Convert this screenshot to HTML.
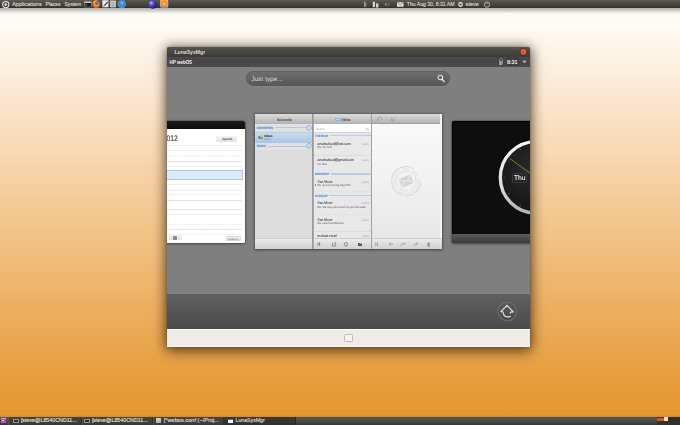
<!DOCTYPE html>
<html><head><meta charset="utf-8">
<style>
*{margin:0;padding:0;box-sizing:border-box}
html,body{width:680px;height:425px;overflow:hidden}
body{position:relative;font-family:"Liberation Sans",sans-serif;
background:linear-gradient(to bottom,#fefcf9 0px,#fefaf4 25px,#fae5cc 105px,#f3ca96 205px,#edb062 305px,#e69a35 395px,#e5962f 425px)}
.a{position:absolute}
.t{position:absolute;line-height:1;white-space:nowrap;text-rendering:geometricPrecision;-webkit-font-smoothing:antialiased}
.p{text-rendering:auto;-webkit-font-smoothing:auto}
svg{position:absolute;overflow:visible}
text{font-family:"Liberation Sans",sans-serif;white-space:pre;text-rendering:geometricPrecision}
.p text{text-rendering:auto}
</style></head><body>
<div class="a" style="left:0px;top:0px;width:680px;height:8px;background:linear-gradient(#5c5a55,#4a4944 40%,#3d3c38 80%,#31302c)"></div>
<div class="a" style="left:0px;top:8px;width:680px;height:6px;background:linear-gradient(rgba(30,25,20,.34),rgba(30,25,20,.2) 45%,rgba(30,25,20,.07) 75%,rgba(30,25,20,0))"></div>
<svg style="left:0;top:0" width="12" height="9"><circle cx="5.8" cy="4.6" r="3.1" fill="none" stroke="#e8e4dc" stroke-width="1.1"/><circle cx="5.8" cy="4.6" r="1.3" fill="#e8e4dc"/></svg>
<svg class="a p" style="left:0;top:0;overflow:visible" width="1" height="1"><text x="11.90" y="6.30" font-size="5.6" fill="#e2ded6" font-weight="normal" stroke="#e2ded6" stroke-width="0.12" textLength="29.8" lengthAdjust="spacingAndGlyphs" style="">Applications</text></svg>
<svg class="a p" style="left:0;top:0;overflow:visible" width="1" height="1"><text x="45.60" y="6.30" font-size="5.6" fill="#e2ded6" font-weight="normal" stroke="#e2ded6" stroke-width="0.12" textLength="15" lengthAdjust="spacingAndGlyphs" style="">Places</text></svg>
<svg class="a p" style="left:0;top:0;overflow:visible" width="1" height="1"><text x="64.50" y="6.30" font-size="5.6" fill="#e2ded6" font-weight="normal" stroke="#e2ded6" stroke-width="0.12" textLength="16.8" lengthAdjust="spacingAndGlyphs" style="">System</text></svg>
<svg style="left:83px;top:0" width="46" height="9"><rect x="1" y="1.2" width="7.6" height="6" rx=".6" fill="#9a9a98"/><rect x="1.6" y="2.4" width="6.4" height="4.4" fill="#1e1e1e"/><rect x="1.6" y="1.8" width="6.4" height="1" fill="#d8d8d6"/><path d="M2.6 4.2 L3.8 5 L2.6 5.8" fill="none" stroke="#ddd" stroke-width=".5"/><circle cx="13.1" cy="4.2" r="3.9" fill="#e2581a"/><circle cx="13.4" cy="4" r="2.6" fill="#f29a2a"/><circle cx="13.9" cy="3.2" r="1.7" fill="#3d7cc6"/><path d="M9.8 3 Q11 -0.4 14.6 0.3 Q12 0.8 11.4 3Z" fill="#f6c24a"/><rect x="19.4" y=".3" width="6" height="7" fill="#f2f2f0"/><path d="M20.6 6.4 L24.6 2.2" stroke="#2a2a2a" stroke-width="1.1"/><path d="M20.4 6.6 L21.4 5.6" stroke="#e8d24a" stroke-width=".9"/><path d="M24.2 2.4 L25.2 1.4" stroke="#a050a0" stroke-width=".9"/><rect x="27.1" y=".6" width="5.8" height="6.8" fill="#cfcfcd"/><path d="M27.8 2.6 H32.2 M27.8 4.2 H32.2 M27.8 5.8 H32.2 M29.3 2.4 V7 M30.8 2.4 V7" stroke="#8e8e8c" stroke-width=".4"/><circle cx="38.8" cy="4.2" r="3.8" fill="#3c84cf"/><circle cx="38.8" cy="4.2" r="3.8" fill="none" stroke="#78aee6" stroke-width=".5"/><path d="M37.6 3.3 Q37.7 2.1 38.8 2.1 Q40 2.1 40 3.2 Q40 3.9 39 4.3 L38.9 5.2" fill="none" stroke="#bfe0ff" stroke-width=".7"/><circle cx="38.9" cy="6.2" r=".35" fill="#bfe0ff"/></svg>
<svg style="left:147px;top:0" width="24" height="9"><defs><radialGradient id="pb" cx=".3" cy=".3" r=".75"><stop offset="0" stop-color="#c8b8f0"/><stop offset=".35" stop-color="#5a58c8"/><stop offset=".8" stop-color="#2a2898"/><stop offset="1" stop-color="#141470"/></radialGradient></defs><circle cx="5.8" cy="4.5" r="4.2" fill="url(#pb)"/><rect x="13.2" y="0" width="8" height="8" rx="1" fill="#5d8fcf"/><rect x="13.2" y="0" width="8" height="6.6" rx="1" fill="#f0c070"/><circle cx="17.2" cy="3.8" r="2.6" fill="none" stroke="#f08a1c" stroke-width="1.8"/><circle cx="17.2" cy="3.8" r="1" fill="#a8b8c8"/></svg>
<svg style="left:362px;top:0" width="130" height="9"><path d="M2.3 2 L4.3 3.6 L2.6 5.4 M2.6 1.6 L2.6 7 L4.3 5.6 L2.4 4" fill="none" stroke="#cfcbc3" stroke-width=".6"/><rect x="10.8" y="1.8" width="2.2" height="5.4" fill="#d9d5cd"/><rect x="14" y="3.5" width="2.4" height="4" fill="#d9d5cd"/><path d="M22.4 4.5 L24.6 2.6 L24.6 6.4Z" fill="#8d8a84"/><path d="M26 3.3 L27.2 5.6 M27.2 3.3 L26 5.6" stroke="#8d8a84" stroke-width=".5"/><rect x="35" y="2.2" width="6.6" height="4.6" rx=".8" fill="#e6e2da"/><path d="M35.6 2.8 L38.3 5 L41 2.8" fill="none" stroke="#4a4944" stroke-width=".6"/><circle cx="98.5" cy="4.5" r="2.4" fill="#e4e0d8"/><circle cx="98.5" cy="4.5" r="1.1" fill="#3c3b37"/><circle cx="125" cy="4.7" r="2.6" fill="none" stroke="#cfcbc3" stroke-width=".8"/><rect x="124.5" y="1.4" width="1" height="2.6" fill="#3c3b37"/><rect x="124.6" y="1.5" width=".8" height="2.6" fill="#cfcbc3"/></svg>
<svg class="a p" style="left:0;top:0;overflow:visible" width="1" height="1"><text x="406.80" y="6.30" font-size="5.4" fill="#e2ded6" font-weight="normal" stroke="#e2ded6" stroke-width="0.12" textLength="47.7" lengthAdjust="spacingAndGlyphs" style="">Thu Aug 30, 8:31 AM</text></svg>
<svg class="a p" style="left:0;top:0;overflow:visible" width="1" height="1"><text x="465.60" y="6.30" font-size="5.6" fill="#e2ded6" font-weight="normal" stroke="#e2ded6" stroke-width="0.12" textLength="13.4" lengthAdjust="spacingAndGlyphs" style="">steve</text></svg>
<div class="a" style="left:0px;top:414.5px;width:680px;height:2.5px;background:linear-gradient(rgba(60,40,10,0),rgba(60,40,10,.12))"></div>
<div class="a" style="left:0px;top:417px;width:680px;height:8px;background:linear-gradient(#4c5257,#55544f 18%,#4a4945 55%,#383733)"></div>
<div class="a" style="left:8px;top:417px;width:74px;height:8px;background:linear-gradient(#45443f,#3a3935);border-right:1px solid #2e2d2a;border-left:1px solid #55544f"></div>
<div class="a" style="left:82px;top:417px;width:71px;height:8px;background:linear-gradient(#45443f,#3a3935);border-right:1px solid #2e2d2a;border-left:1px solid #55544f"></div>
<div class="a" style="left:153px;top:417px;width:71px;height:8px;background:linear-gradient(#45443f,#3a3935);border-right:1px solid #2e2d2a;border-left:1px solid #55544f"></div>
<div class="a" style="left:224px;top:417px;width:72px;height:8px;background:linear-gradient(#3a3935,#32312e);border-right:1px solid #2a2926"></div>
<div class="a" style="left:0.5px;top:418.2px;width:5.5px;height:5.2px;background:linear-gradient(#d8c8e0 0,#c0a8cc 22%,#a83ab0 26%,#cc50d0)"></div>
<div class="a" style="left:1.6px;top:419.6px;width:2.4px;height:1.6px;background:#f0e8f4"></div>
<div class="a" style="left:12.6px;top:418.6px;width:6px;height:4px;background:#2c2c2a;border:0.6px solid #9a9890;border-radius:.6px"></div>
<svg class="a p" style="left:0;top:0;overflow:visible" width="1" height="1"><text x="20.90" y="422.40" font-size="5.2" fill="#e6e2da" font-weight="normal" stroke="#e6e2da" stroke-width="0.12" textLength="55.8" lengthAdjust="spacingAndGlyphs" style="">[steve@L8540CND11...</text></svg>
<div class="a" style="left:83.6px;top:418.6px;width:6px;height:4px;background:#2c2c2a;border:0.6px solid #9a9890;border-radius:.6px"></div>
<svg class="a p" style="left:0;top:0;overflow:visible" width="1" height="1"><text x="91.90" y="422.40" font-size="5.2" fill="#e6e2da" font-weight="normal" stroke="#e6e2da" stroke-width="0.12" textLength="55.8" lengthAdjust="spacingAndGlyphs" style="">[steve@L8540CND11...</text></svg>
<div class="a" style="left:155.5px;top:418.4px;width:5px;height:5px;background:linear-gradient(#ddd,#aaa);border-radius:.5px"></div>
<svg class="a p" style="left:0;top:0;overflow:visible" width="1" height="1"><text x="163.80" y="422.40" font-size="5.2" fill="#e2ded6" font-weight="normal" stroke="#e2ded6" stroke-width="0.12" textLength="55.2" lengthAdjust="spacingAndGlyphs" style="">[*webos.conf (~/Proj...</text></svg>
<div class="a" style="left:227.5px;top:418.8px;width:5.3px;height:4px;background:#f4f4f4;border-top:1.2px solid #5577aa"></div>
<svg class="a p" style="left:0;top:0;overflow:visible" width="1" height="1"><text x="235.50" y="422.40" font-size="5.2" fill="#e2ded6" font-weight="normal" stroke="#e2ded6" stroke-width="0.12" textLength="29.2" lengthAdjust="spacingAndGlyphs" style="">LunaSysMgr</text></svg>
<div class="a" style="left:657px;top:417px;width:23px;height:8px;background:#33322f"></div>
<div class="a" style="left:657px;top:417.6px;width:7px;height:3.2px;background:#d2562a"></div>
<div class="a" style="left:663.6px;top:417.2px;width:4.2px;height:3.8px;background:#fbe4d4;box-shadow:0 0 .5px #fff"></div>
<div class="a" style="left:668.5px;top:417.6px;width:5.5px;height:3.2px;background:#2c2c2a"></div>
<div class="a" style="left:674.5px;top:417.6px;width:5.5px;height:3.2px;background:#2c2c2a"></div>
<div class="a" style="left:167px;top:47px;width:363px;height:300px;border-radius:2px 2px 0 0;overflow:hidden;background:#7f7f7f;box-shadow:0 4px 14px 1px rgba(40,20,0,.5),0 0 11px 1px rgba(30,20,10,.38),0 0 2px rgba(0,0,0,.35)"><div class="a" style="left:0px;top:0px;width:363px;height:10px;background:linear-gradient(#575651,#4a4944 35%,#3c3b37)"></div>
<svg class="a p" style="left:0;top:0;overflow:visible" width="1" height="1"><text x="7.40" y="6.80" font-size="5.2" fill="#dfdbd2" font-weight="bold" textLength="30.8" lengthAdjust="spacingAndGlyphs" style="">LunaSysMgr</text></svg>
<svg style="left:352px;top:1px" width="10" height="9"><circle cx="4.4" cy="3.9" r="3.6" fill="#2e2d29" opacity=".5"/><circle cx="4.4" cy="3.9" r="2.8" fill="#ee5a24"/><circle cx="4.4" cy="3.6" r="2" fill="#f4703a" opacity=".6"/><circle cx="4.4" cy="3.9" r=".7" fill="#6a2a12"/></svg>
<div class="a" style="left:0px;top:10px;width:363px;height:10px;background:linear-gradient(#4b4b4a,#464646 55%,#4d4d4d)"></div>
<svg class="a p" style="left:0;top:0;overflow:visible" width="1" height="1"><text x="2.60" y="16.60" font-size="4.7" fill="#f2f2f2" font-weight="bold" textLength="22.5" lengthAdjust="spacingAndGlyphs" style="">HP webOS</text></svg>
<div class="a" style="left:330.3px;top:10.4px;width:7px;height:9px;background:rgba(0,0,0,.1)"></div>
<div class="a" style="left:338.6px;top:10.4px;width:13px;height:9px;background:rgba(0,0,0,.12)"></div>
<div class="a" style="left:331.6px;top:11.4px;width:4.6px;height:6.8px;border:.6px solid #8a8a8a;border-radius:1.6px;background:#444"></div>
<div class="a" style="left:332.4px;top:14.2px;width:3px;height:3.4px;background:#9a9a9a;border-radius:.6px"></div>
<svg class="a p" style="left:0;top:0;overflow:visible" width="1" height="1"><text x="339.90" y="16.70" font-size="6.0" fill="#f4f4f4" font-weight="bold" textLength="10.6" lengthAdjust="spacingAndGlyphs" style="">8:31</text></svg>
<svg style="left:354px;top:12px" width="8" height="6"><path d="M1.2 1.8 L5.6 1.8 L3.4 4.2Z" fill="#bbb"/></svg>
<div class="a" style="left:0px;top:20px;width:363px;height:227px;background:#7f7f7f"></div>
<div class="a" style="left:79px;top:23.8px;width:204px;height:15px;border-radius:7.5px;background:linear-gradient(#717171,#5f5f5f 60%,#575757);box-shadow:inset 0 .8px .8px rgba(0,0,0,.22),0 .5px .5px rgba(255,255,255,.1)"></div>
<svg class="a " style="left:0;top:0;overflow:visible" width="1" height="1"><text x="84.20" y="34.00" font-size="6.4" fill="#dcdcdc" font-weight="normal" textLength="31.6" lengthAdjust="spacingAndGlyphs" style="">Just type...</text></svg>
<svg style="left:268px;top:25px" width="14" height="14"><circle cx="5.3" cy="5.5" r="2.3" fill="none" stroke="#e4e4e4" stroke-width="1.05"/><path d="M7 7.3 L9.2 9.5" stroke="#e4e4e4" stroke-width="1.4" stroke-linecap="round"/></svg>
<div class="a" style="left:0px;top:246px;width:363px;height:1px;background:#838383"></div>
<div class="a" style="left:0px;top:247px;width:363px;height:35px;background:linear-gradient(#606060,#4a4a4a)"></div>
<div class="a" style="left:0px;top:282px;width:363px;height:18px;background:#efebe7;border-top:1px solid #fbfaf8;border-bottom:1px solid #fbfaf8"></div>
<div class="a" style="left:177px;top:286.5px;width:9px;height:8px;border:1px solid #bdb9b4;border-radius:1.5px;background:#f7f5f2"></div>
<svg style="left:328px;top:253px" width="25" height="24"><defs><linearGradient id="hb" x1="0" y1="0" x2="0" y2="1"><stop offset="0" stop-color="#5c5c5c"/><stop offset="1" stop-color="#484848"/></linearGradient></defs><circle cx="12.3" cy="11.4" r="9.3" fill="url(#hb)" stroke="#686868" stroke-width="1.5"/><path d="M8.2 12.1 L5.9 11.6 L12 5.4 L18.3 11.9 L15.5 12.1 L15.3 13.6" fill="none" stroke="#e4e4e4" stroke-width="1.1" stroke-linejoin="round"/><path d="M8.4 12.6 C8.4 15.6 10 16.9 12.4 16.9 C13.8 16.9 15 16.7 15.8 16.3" fill="none" stroke="#e4e4e4" stroke-width="1.1"/></svg>
<div class="a" style="left:-10px;top:74px;width:88px;height:121.6px;will-change:transform"><div class="a" style="left:0px;top:0px;width:88px;height:121.6px;background:#fff;border-radius:0 1.5px 1.5px 0;box-shadow:0 0 1.5px 1px rgba(0,0,0,.22),0 1px 3px rgba(0,0,0,.3)"></div>
<div class="a" style="left:0px;top:0px;width:88px;height:8px;background:linear-gradient(#1c1c1c,#0c0c0c);border-radius:0 1.5px 0 0"></div>
<svg class="a " style="left:0;top:0;overflow:visible" width="1" height="1"><text x="9.50" y="19.90" font-size="8.2" fill="#2e2e2e" font-weight="normal" stroke="#2e2e2e" stroke-width="0.12" textLength="11.1" lengthAdjust="spacingAndGlyphs" style="">012</text></svg>
<div class="a" style="left:59.3px;top:15px;width:21px;height:6px;border-radius:1.5px;background:linear-gradient(#f6f6f6,#e4e4e4);box-shadow:0 0 .6px rgba(0,0,0,.25)"></div>
<svg class="a " style="left:0;top:0;overflow:visible" width="1" height="1"><text x="65.00" y="19.00" font-size="3.4" fill="#555" font-weight="bold" textLength="10.3" lengthAdjust="spacingAndGlyphs" style="">Agenda</text></svg>
<div class="a" style="left:0px;top:24px;width:85px;height:0.8px;background:#efefef"></div>
<div class="a" style="left:0px;top:29.2px;width:85px;height:0.8px;background:#f0f0f0"></div>
<svg style="left:0;top:0" width="88" height="122"><line x1="3" y1="35.0" x2="85" y2="35.0" stroke="#e4e4e4" stroke-width=".8" stroke-dasharray="1.4 1"/></svg>
<div class="a" style="left:0px;top:39.6px;width:85px;height:0.8px;background:#e2e2e2"></div>
<div class="a" style="left:0px;top:45px;width:85px;height:0.8px;background:#f0f0f0"></div>
<div class="a" style="left:0px;top:63px;width:85px;height:0.8px;background:#efefef"></div>
<div class="a" style="left:0px;top:68.6px;width:85px;height:0.8px;background:#eaeaea"></div>
<div class="a" style="left:0px;top:73.2px;width:85px;height:0.8px;background:#f0f0f0"></div>
<div class="a" style="left:0px;top:79px;width:85px;height:0.8px;background:#e4e4e4"></div>
<div class="a" style="left:0px;top:88.4px;width:85px;height:0.8px;background:#e4e4e4"></div>
<div class="a" style="left:0px;top:93px;width:85px;height:0.8px;background:#eeeeee"></div>
<svg style="left:0;top:0" width="88" height="122"><line x1="3" y1="103.7" x2="85" y2="103.7" stroke="#e4e4e4" stroke-width=".8" stroke-dasharray="1.4 1"/></svg>
<div class="a" style="left:0px;top:107.6px;width:85px;height:0.8px;background:#e4e4e4"></div>
<div class="a" style="left:0px;top:112.5px;width:85px;height:0.8px;background:#f2f2f2"></div>
<div class="a" style="left:0px;top:49.4px;width:86px;height:9.8px;background:#dce9f7;border:.6px solid #a8c5e6"></div>
<div class="a" style="left:12px;top:113.7px;width:13px;height:5.8px;background:linear-gradient(#f4f4f4,#e0e0e0);border-radius:1px"></div>
<div class="a" style="left:16px;top:115.2px;width:4px;height:4px;background:#8a8a8a;border-radius:.4px"></div>
<div class="a" style="left:68.6px;top:114.9px;width:15.6px;height:4.8px;background:linear-gradient(#f6f6f6,#e2e2e2);border:.4px solid #d4d4d4;border-radius:1.2px"></div>
<svg class="a " style="left:0;top:0;overflow:visible" width="1" height="1"><text x="71.00" y="118.50" font-size="2.8" fill="#666" font-weight="normal" style="">Jump to...</text></svg>
</div>
<div class="a" style="left:285px;top:73.6px;width:90px;height:122px;will-change:transform"><div class="a" style="left:0px;top:0px;width:90px;height:122px;background:#0e0e0e;border:.6px solid #000;border-radius:1.5px 0 0 1.5px;box-shadow:0 0 1.5px 1px rgba(0,0,0,.22),0 1px 3px rgba(0,0,0,.3)"></div>
<div class="a" style="left:0px;top:113px;width:90px;height:9px;background:linear-gradient(#5c5c5c,#3a3a3a);border-radius:0 0 0 1.5px"></div>
<svg style="left:0;top:0" width="90" height="113"><defs><radialGradient id="cf" cx=".45" cy=".4" r=".6"><stop offset="0" stop-color="#2c2c2c"/><stop offset="1" stop-color="#141414"/></radialGradient><linearGradient id="cr" x1="0" y1="0" x2="0" y2="1"><stop offset="0" stop-color="#fafafa"/><stop offset=".6" stop-color="#dedede"/><stop offset="1" stop-color="#b4b4b4"/></linearGradient></defs><circle cx="84.1" cy="56.4" r="37.6" fill="none" stroke="#000" stroke-width="1"/><circle cx="84.1" cy="56.4" r="35.8" fill="url(#cf)" stroke="url(#cr)" stroke-width="3.4"/><path d="M57.4 37.3 L84 56.4" stroke="#74a830" stroke-width=".8"/><g fill="#5f8f24"><circle cx="68.1" cy="28.7" r=".6"/><circle cx="57" cy="40.7" r=".6"/><circle cx="52.1" cy="56.6" r=".6"/><circle cx="57" cy="72.5" r=".6"/><circle cx="68.1" cy="84.3" r=".6"/></g></svg>
<div class="a" style="left:59.8px;top:51.8px;width:15px;height:10.3px;background:#242424;border:.5px solid #363636;border-radius:1px"></div>
<svg class="a " style="left:0;top:0;overflow:visible" width="1" height="1"><text x="61.90" y="59.10" font-size="6.7" fill="#f4f4f4" font-weight="normal" stroke="#f4f4f4" stroke-width="0.1" textLength="11.6" lengthAdjust="spacingAndGlyphs" style="">Thu</text></svg>
</div>
<div class="a" style="left:88px;top:67.1px;width:186.7px;height:134.9px;will-change:transform"><div class="a" style="left:0px;top:0px;width:186.7px;height:134.9px;background:#ddd;box-shadow:0 0 1.5px 1px rgba(0,0,0,.22),0 1px 3px rgba(0,0,0,.3)"></div>
<div class="a" style="left:0px;top:0px;width:57px;height:10.6px;background:linear-gradient(#dcdcdc,#c6c6c6 55%,#b2b2b2);border-bottom:.7px solid #a0a0a0"></div>
<svg class="a " style="left:0;top:0;overflow:visible" width="1" height="1"><text x="21.90" y="7.00" font-size="3.9" fill="#3a3a3a" font-weight="normal" stroke="#3a3a3a" stroke-width="0.08" textLength="14.8" lengthAdjust="spacingAndGlyphs" style="">Accounts</text></svg>
<div class="a" style="left:0px;top:10.3px;width:57px;height:114px;background:#dcdcdc"></div>
<div class="a" style="left:0px;top:10.3px;width:57px;height:7.2px;background:#e2e1df"></div>
<svg class="a " style="left:0;top:0;overflow:visible" width="1" height="1"><text x="1.80" y="15.00" font-size="3.1" fill="#4a8fd8" font-weight="bold" stroke="#4a8fd8" stroke-width="0.12" textLength="16.2" lengthAdjust="spacingAndGlyphs" style="">FAVORITES</text></svg>
<div class="a" style="left:20.2px;top:13px;width:34px;height:1.3px;background:#b1cbe6"></div>
<svg style="left:51.2px;top:10.8px" width="6" height="6"><circle cx="3" cy="2.8" r="2.3" fill="#e6eef8" stroke="#5b98da" stroke-width=".7"/><circle cx="3" cy="2.8" r=".8" fill="#9cc0e8"/></svg>
<div class="a" style="left:0px;top:17.5px;width:57px;height:11.2px;background:linear-gradient(#cadcef,#a9c4e2);border-top:.4px solid #b9d0e8"></div>
<svg style="left:3px;top:19.8px" width="6" height="6"><rect x=".3" y="2.2" width="4.5" height="2.6" fill="#5a7fae"/><circle cx="3.6" cy="2.1" r="1.5" fill="#f3c646"/></svg>
<svg class="a " style="left:0;top:0;overflow:visible" width="1" height="1"><text x="9.00" y="22.70" font-size="3.4" fill="#222" font-weight="bold" textLength="8.6" lengthAdjust="spacingAndGlyphs" style="">Inbox</text></svg>
<svg class="a " style="left:0;top:0;overflow:visible" width="1" height="1"><text x="9.00" y="25.50" font-size="2.6" fill="#7a8696" font-weight="normal" textLength="6.6" lengthAdjust="spacingAndGlyphs" style="">Gmail</text></svg>
<div class="a" style="left:0px;top:28.7px;width:57px;height:7px;background:#e2e1df"></div>
<svg class="a " style="left:0;top:0;overflow:visible" width="1" height="1"><text x="1.80" y="33.10" font-size="3.1" fill="#4a8fd8" font-weight="bold" stroke="#4a8fd8" stroke-width="0.12" textLength="9.2" lengthAdjust="spacingAndGlyphs" style="">EMAILS</text></svg>
<div class="a" style="left:13px;top:31.6px;width:41.2px;height:1.3px;background:#b1cbe6"></div>
<svg style="left:50.8px;top:29.4px" width="6" height="6"><circle cx="3" cy="2.8" r="2.3" fill="#e6eef8" stroke="#5b98da" stroke-width=".7"/><circle cx="3" cy="2.8" r=".8" fill="#9cc0e8"/></svg>
<div class="a" style="left:0px;top:123.9px;width:57px;height:11px;background:linear-gradient(#ebebeb,#dadada 60%,#d2d2d2);border-top:.5px solid #cfcfcf"></div>
<div class="a" style="left:57px;top:0px;width:2px;height:134.9px;background:linear-gradient(90deg,#939393,#b0b0b0)"></div>
<div class="a" style="left:59px;top:0px;width:57px;height:10.6px;background:linear-gradient(#dcdcdc,#c6c6c6 55%,#b2b2b2);border-bottom:.7px solid #a0a0a0"></div>
<div class="a" style="left:80.4px;top:4px;width:4.4px;height:3.2px;background:linear-gradient(#dceaf8,#a9c9ea);border:.4px solid #8ab3de"></div>
<svg class="a " style="left:0;top:0;overflow:visible" width="1" height="1"><text x="86.50" y="7.00" font-size="3.9" fill="#3a3a3a" font-weight="normal" stroke="#3a3a3a" stroke-width="0.08" textLength="9.1" lengthAdjust="spacingAndGlyphs" style="">Inbox</text></svg>
<div class="a" style="left:59px;top:10.3px;width:57px;height:8.6px;background:#fff;border-bottom:.5px solid #d4d4d4"></div>
<svg class="a " style="left:0;top:0;overflow:visible" width="1" height="1"><text x="60.70" y="15.90" font-size="3.2" fill="#aaa" font-weight="normal" textLength="9.1" lengthAdjust="spacingAndGlyphs" style="">Search</text></svg>
<svg style="left:110.4px;top:12.6px" width="6" height="6"><circle cx="2.2" cy="2.2" r="1.1" fill="none" stroke="#aaa" stroke-width=".5"/><path d="M3 3 L4 4" stroke="#aaa" stroke-width=".6"/></svg>
<div class="a" style="left:59px;top:18.9px;width:57px;height:105.4px;background:#e8e8e8"></div>
<svg class="a " style="left:0;top:0;overflow:visible" width="1" height="1"><text x="60.10" y="22.90" font-size="3.1" fill="#4a90d8" font-weight="bold" stroke="#4a90d8" stroke-width="0.08" textLength="13.2" lengthAdjust="spacingAndGlyphs" style="">TUESDAY</text></svg>
<div class="a" style="left:74.7px;top:21.0px;width:40.9px;height:1.4px;background:#b6cde6"></div>
<svg class="a " style="left:0;top:0;overflow:visible" width="1" height="1"><text x="62.60" y="30.60" font-size="3.9" fill="#383838" font-weight="normal" stroke="#383838" stroke-width="0.05" textLength="33" lengthAdjust="spacingAndGlyphs" style="">amalsolsod@fast.com</text></svg>
<svg class="a " style="left:0;top:0;overflow:visible" width="1" height="1"><text x="62.60" y="34.10" font-size="3.0" fill="#555" font-weight="normal" textLength="14.2" lengthAdjust="spacingAndGlyphs" style="">Re: No Text</text></svg>
<svg class="a " style="left:0;top:0;overflow:visible" width="1" height="1"><text x="106.90" y="30.60" font-size="2.4" fill="#9a9a9a" font-weight="normal" textLength="7" lengthAdjust="spacingAndGlyphs" style="">8/30/12</text></svg>
<div class="a" style="left:59px;top:40.8px;width:57px;height:0.6px;background:#dcdcdc"></div>
<svg class="a " style="left:0;top:0;overflow:visible" width="1" height="1"><text x="62.60" y="47.10" font-size="3.9" fill="#383838" font-weight="normal" stroke="#383838" stroke-width="0.05" textLength="36.3" lengthAdjust="spacingAndGlyphs" style="">amalsolsod@gmail.com</text></svg>
<svg class="a " style="left:0;top:0;overflow:visible" width="1" height="1"><text x="62.60" y="50.60" font-size="3.0" fill="#555" font-weight="normal" textLength="9.4" lengthAdjust="spacingAndGlyphs" style="">No Text</text></svg>
<svg class="a " style="left:0;top:0;overflow:visible" width="1" height="1"><text x="106.90" y="47.10" font-size="2.4" fill="#9a9a9a" font-weight="normal" textLength="7" lengthAdjust="spacingAndGlyphs" style="">8/30/12</text></svg>
<div class="a" style="left:59px;top:56px;width:57px;height:0.6px;background:#e3e3e3"></div>
<svg class="a " style="left:0;top:0;overflow:visible" width="1" height="1"><text x="60.10" y="61.20" font-size="3.1" fill="#4a90d8" font-weight="bold" stroke="#4a90d8" stroke-width="0.08" textLength="14.2" lengthAdjust="spacingAndGlyphs" style="">MONDAY</text></svg>
<div class="a" style="left:75.7px;top:59.300000000000004px;width:39.9px;height:1.4px;background:#b6cde6"></div>
<svg class="a " style="left:0;top:0;overflow:visible" width="1" height="1"><text x="62.60" y="68.80" font-size="3.9" fill="#383838" font-weight="normal" stroke="#383838" stroke-width="0.05" textLength="15" lengthAdjust="spacingAndGlyphs" style="">San Mone</text></svg>
<svg class="a " style="left:0;top:0;overflow:visible" width="1" height="1"><text x="62.60" y="72.30" font-size="3.0" fill="#555" font-weight="normal" textLength="34" lengthAdjust="spacingAndGlyphs" style="">Re: good morning Aug 27th.</text></svg>
<svg class="a " style="left:0;top:0;overflow:visible" width="1" height="1"><text x="106.90" y="68.80" font-size="2.4" fill="#9a9a9a" font-weight="normal" textLength="7" lengthAdjust="spacingAndGlyphs" style="">8/30/12</text></svg>
<div class="a" style="left:60.2px;top:70.39999999999999px;width:1.3px;height:1.3px;background:#4a8ed8;border-radius:50%"></div>
<div class="a" style="left:59px;top:77px;width:57px;height:0.6px;background:#e3e3e3"></div>
<svg class="a " style="left:0;top:0;overflow:visible" width="1" height="1"><text x="60.10" y="82.90" font-size="3.1" fill="#4a90d8" font-weight="bold" stroke="#4a90d8" stroke-width="0.08" textLength="12.7" lengthAdjust="spacingAndGlyphs" style="">SUNDAY</text></svg>
<div class="a" style="left:74.2px;top:81.0px;width:41.4px;height:1.4px;background:#b6cde6"></div>
<svg class="a " style="left:0;top:0;overflow:visible" width="1" height="1"><text x="62.60" y="90.40" font-size="3.9" fill="#383838" font-weight="normal" stroke="#383838" stroke-width="0.05" textLength="15" lengthAdjust="spacingAndGlyphs" style="">San Mone</text></svg>
<svg class="a " style="left:0;top:0;overflow:visible" width="1" height="1"><text x="62.60" y="93.90" font-size="3.0" fill="#555" font-weight="normal" textLength="48" lengthAdjust="spacingAndGlyphs" style="">Re: We new jobs found for you this week</text></svg>
<svg class="a " style="left:0;top:0;overflow:visible" width="1" height="1"><text x="106.90" y="90.40" font-size="2.4" fill="#9a9a9a" font-weight="normal" textLength="7" lengthAdjust="spacingAndGlyphs" style="">8/30/12</text></svg>
<div class="a" style="left:59px;top:100px;width:57px;height:0.6px;background:#e3e3e3"></div>
<svg class="a " style="left:0;top:0;overflow:visible" width="1" height="1"><text x="62.60" y="106.80" font-size="3.9" fill="#383838" font-weight="normal" stroke="#383838" stroke-width="0.05" textLength="15" lengthAdjust="spacingAndGlyphs" style="">San Mone</text></svg>
<svg class="a " style="left:0;top:0;overflow:visible" width="1" height="1"><text x="62.60" y="110.30" font-size="3.0" fill="#555" font-weight="normal" textLength="26" lengthAdjust="spacingAndGlyphs" style="">Re: Used Car Blowout</text></svg>
<svg class="a " style="left:0;top:0;overflow:visible" width="1" height="1"><text x="106.90" y="106.80" font-size="2.4" fill="#9a9a9a" font-weight="normal" textLength="7" lengthAdjust="spacingAndGlyphs" style="">8/30/12</text></svg>
<div class="a" style="left:59px;top:117.4px;width:57px;height:0.6px;background:#dcdcdc"></div>
<svg class="a " style="left:0;top:0;overflow:visible" width="1" height="1"><text x="62.60" y="123.20" font-size="3.9" fill="#383838" font-weight="normal" stroke="#383838" stroke-width="0.05" textLength="19" lengthAdjust="spacingAndGlyphs" style="">mobisis email</text></svg>
<svg class="a " style="left:0;top:0;overflow:visible" width="1" height="1"><text x="106.90" y="123.20" font-size="2.4" fill="#9a9a9a" font-weight="normal" textLength="7" lengthAdjust="spacingAndGlyphs" style="">8/30/12</text></svg>
<div class="a" style="left:59px;top:123.9px;width:57px;height:11px;background:linear-gradient(#ebebeb,#dadada 60%,#d2d2d2);border-top:.5px solid #cfcfcf"></div>
<svg style="left:59px;top:124.6px" width="57" height="11" fill="#7a7a7a"><rect x="3.6" y="3.4" width=".9" height="3.4"/><rect x="5.2" y="3.4" width=".9" height="3.4"/><path d="M18.4 4 L18.4 7 L21.6 7 L21.6 5.2 M19.8 4 L21.6 4 L21.6 5" fill="none" stroke="#6a6a6a" stroke-width=".7"/><circle cx="32" cy="5.3" r="1.7" fill="none" stroke="#6a6a6a" stroke-width=".7"/><path d="M44 4 L45.6 4 L46.2 4.6 L48 4.6 L48 7 L44 7Z" fill="#5a5a5a"/></svg>
<div class="a" style="left:116px;top:0px;width:1.4px;height:134.9px;background:#a0a0a0"></div>
<div class="a" style="left:117.4px;top:0px;width:69.3px;height:10.4px;background:linear-gradient(#dcdcdc,#c6c6c6 55%,#b2b2b2);border-bottom:.7px solid #a0a0a0"></div>
<svg style="left:117.4px;top:0" width="69" height="10" fill="none" stroke="#8a8a8a" stroke-width=".6"><path d="M6 6.4 A2.2 2.2 0 1 1 9.8 6.2 M5.4 5.6 L6 6.6 L7 6"/><path d="M19.8 3.8 L19.8 7 L23 7 M20.8 5.8 L22.4 4.2 L23.6 3"/></svg>
<div class="a" style="left:117.4px;top:10px;width:69.3px;height:114.6px;background:linear-gradient(#f9f9f9,#f1f1f1 50%,#e7e7e7)"></div>
<div class="a" style="left:185.4px;top:0px;width:1.3px;height:134.9px;background:linear-gradient(90deg,#f0f0f0,#fff)"></div>
<svg style="left:117.4px;top:10px" width="69" height="115" fill="none" stroke="#d9d9d9"><circle cx="34.2" cy="57.1" r="14.6" stroke-width="1.1" stroke-dasharray="14 1.5 8 2 20 1 30"/><circle cx="34.2" cy="57.1" r="10" stroke-width=".8" stroke-dasharray="12 2 9 1.5 40"/><circle cx="34.2" cy="57.1" r="12.3" stroke-width="1.4" stroke="#e0e0e0" stroke-dasharray="1 .7 1.3 .6 .8 .9 1.2 .6 1 2.5"/><g transform="rotate(-22 34.2 57.1)"><rect x="27.8" y="52.6" width="12.8" height="9" rx=".8" fill="#d4d4d4" stroke="none"/><path d="M28.2 53.2 L34.2 57.8 L40.2 53.2 M28.2 61 L32.4 56.6 M40.2 61 L36 56.6" stroke="#f2f2f2" stroke-width=".8"/></g></svg>
<div class="a" style="left:117.4px;top:123.9px;width:69.3px;height:11px;background:linear-gradient(#ebebeb,#dadada 60%,#d2d2d2);border-top:.5px solid #cfcfcf"></div>
<svg style="left:117.4px;top:124.6px" width="69" height="11" fill="none" stroke="#8a8a8a" stroke-width=".7"><path d="M3.8 3.6 V7 M5.4 3.6 V7"/><path d="M17.4 6.8 Q17.8 4.4 21 4.6 M17.4 4.8 L18.6 3.6 M17.4 4.8 L18.8 6"/><path d="M28.8 6.4 Q29.6 4.2 33.6 4.6 M30 4.8 L28.8 5.8"/><path d="M42 6.8 Q42.6 4.4 45.6 4.6 M45.6 4.6 L44.4 3.4 M45.6 4.6 L44.4 5.8"/><rect x="55.3" y="3.6" width="2.6" height="4.2" rx=".6" fill="#9a9a9a" stroke="none"/></svg>
</div>
</div>
</body></html>
